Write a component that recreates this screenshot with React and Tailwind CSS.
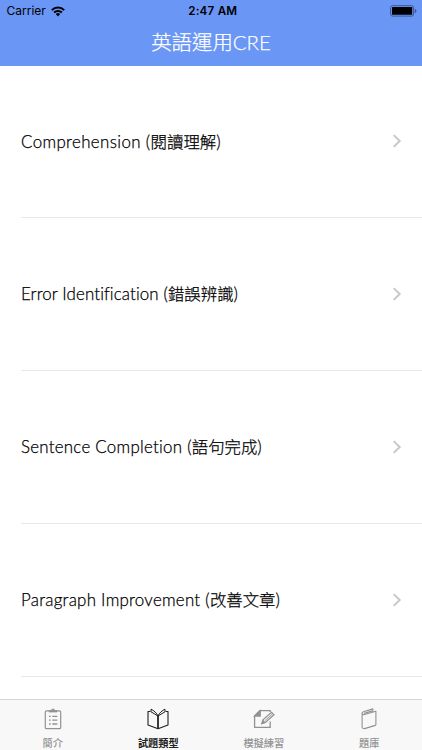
const topics = [
  { en: "Comprehension", zh: "閱讀理解", tracking: "tracking-[0.38px]" },
  { en: "Error Identification", zh: "錯誤辨識", tracking: "tracking-[0.12px]" },
  { en: "Sentence Completion", zh: "語句完成", tracking: "tracking-[0.26px]" },
  { en: "Paragraph Improvement", zh: "改善文章", tracking: "tracking-[0.27px]" },
];

function WifiIcon() {
  return (
    <svg width="14" height="11" viewBox="0 0 14 11" fill="none" stroke="currentColor" strokeWidth="2">
      <path d="M0.8 4.1a8.8 8.8 0 0 1 12.4 0" />
      <path d="M3.1 6.5a5.5 5.5 0 0 1 7.8 0" />
      <path d="M7 10.4 4.8 8.1a3.1 3.1 0 0 1 4.4 0z" fill="currentColor" stroke="none" />
    </svg>
  );
}

function BatteryIcon() {
  return (
    <svg width="28" height="12" viewBox="0 0 28 12">
      <rect x="1.6" y="0.7" width="23" height="10.4" rx="2" fill="none" stroke="#3e5690" />
      <rect x="3" y="2" width="20.2" height="7.8" rx="0.6" fill="#000" />
      <path d="M25.8 4v4c1.2-.4 1.6-1.1 1.6-2s-.4-1.6-1.6-2z" fill="#3e5690" />
    </svg>
  );
}

function ClipboardIcon() {
  return (
    <svg width="22" height="22" viewBox="0 0 22 22" fill="none" stroke="currentColor" strokeWidth="1.2">
      <rect x="3.3" y="2.8" width="15.4" height="17.9" rx="1.3" />
      <path d="M7 2.6h2.3a1.7 1.7 0 0 1 3.4 0H15v1.5H7z" fill="currentColor" strokeWidth="0.6" />
      <path d="M7 8.4h1.7M10.3 8.4h5M7 12.2h1.7M10.3 12.2h5M7 16h1.7M10.3 16h5" strokeWidth="1.3" />
    </svg>
  );
}

function OpenBookIcon() {
  return (
    <svg width="22" height="22" viewBox="0 0 22 22" fill="none" stroke="currentColor" strokeWidth="1.1" strokeLinejoin="round">
      <path d="M3.4 3.5H1v13.4l10 3.9 10-3.9V3.5h-2.4" />
      <path d="M11 20.4V8C9.6 4.8 6.8 2.5 4 1.2v2.6L11 8c1.4-3.2 4.2-5.5 7-6.8v2.6L11 8" strokeWidth="1" />
      <path d="M11 8v12.4" strokeWidth="1.5" />
    </svg>
  );
}

function EditIcon() {
  return (
    <svg width="22" height="22" viewBox="0 0 22 22" fill="none" stroke="currentColor" strokeWidth="1.3">
      <path d="M17.2 4V2.7H6.8L1.6 7.9v11.4h15.6v-5.8" />
      <path d="M7.2 2.7v5.4H1.6z" fill="currentColor" />
      <path d="m9 15.5 1.2-3.9 8.3-7.3 2.4 2.5-8.2 7.5z" />
      <path d="m9 15.5.8-2.7 1.9 1.8z" fill="currentColor" />
      <path d="m11.7 12.9 7.4-6.7" strokeWidth="0.9" />
    </svg>
  );
}

function BookIcon() {
  return (
    <svg width="22" height="22" viewBox="0 0 22 22" fill="none" stroke="currentColor" strokeWidth="1.1" strokeLinejoin="round">
      <path d="M4.1 4.9v14c0 1.3 1.1 2.1 2.5 1.7l10.7-3.2c.4-.1.6-.4.6-.8V3.3L6.5 6.5c-1.5.4-3-.7-2.2-1.9.3-.4.7-.6 1.2-.8L14.8.9v2.8" />
      <path d="m6.1 5.3 8.4-2.5" strokeWidth="1.4" />
    </svg>
  );
}

const tabs = [
  { label: "簡介", Icon: ClipboardIcon },
  { label: "試題類型", Icon: OpenBookIcon, active: true },
  { label: "模擬練習", Icon: EditIcon },
  { label: "題庫", Icon: BookIcon },
];

function Header() {
  return (
    <header className="h-[65.5px] shrink-0 bg-[#6a96f5]">
      <div className="grid h-[22px] grid-cols-3 items-center pl-[6.5px] pr-[5px] font-['Inter','Liberation_Sans',sans-serif] text-[12px] text-black">
        <div className="flex items-center gap-[5px]">
          <span>Carrier</span>
          <WifiIcon />
        </div>
        <span className="pl-[2px] pt-px text-center text-[11.7px] font-semibold tracking-[0.2px]">2:47 AM</span>
        <div className="flex justify-end">
          <BatteryIcon />
        </div>
      </div>
      <h1 className="text-center font-['Lato','Noto_Sans_CJK_TC',sans-serif] text-[20.4px] font-light leading-[40px] text-white [-webkit-text-stroke:0.25px]">
        英語運用CRE
      </h1>
    </header>
  );
}

function TopicRow({ en, zh, tracking }) {
  return (
    <li className="ml-[21px] flex h-[152.75px] shrink-0 items-center justify-between border-b border-[#e8e8e8] pr-[20px]">
      <span className="whitespace-nowrap text-[16.9px] font-light text-black [-webkit-text-stroke:0.25px]">
        <span className={tracking}>{en} (</span>
        <span className="text-[16.4px]">{zh}</span>)
      </span>
      <svg width="10" height="14" viewBox="0 0 10 14" fill="none" stroke="#c7c7cc" strokeWidth="2">
        <path d="m1.7 1.1 6 5.9-6 5.9" />
      </svg>
    </li>
  );
}

export default function App() {
  return (
    <div className="flex h-[750px] w-[422px] flex-col overflow-hidden bg-white font-['Lato','Noto_Sans_CJK_TC',sans-serif]">
      <Header />
      <ul className="flex flex-1 flex-col overflow-hidden">
        {topics.map((topic) => (
          <TopicRow key={topic.en} {...topic} />
        ))}
      </ul>
      <nav className="grid h-[51px] shrink-0 grid-cols-4 border-t border-[#d5d5d5] bg-[#f8f8f8]">
        {tabs.map(({ label, Icon, active }) => (
          <div key={label} className={`flex flex-col items-center pt-[8px] ${active ? "font-bold text-[#202020]" : "font-medium text-[#929292]"}`}>
            <Icon />
            <span className="mt-[5px] text-[10.2px] leading-[16px]">{label}</span>
          </div>
        ))}
      </nav>
    </div>
  );
}
